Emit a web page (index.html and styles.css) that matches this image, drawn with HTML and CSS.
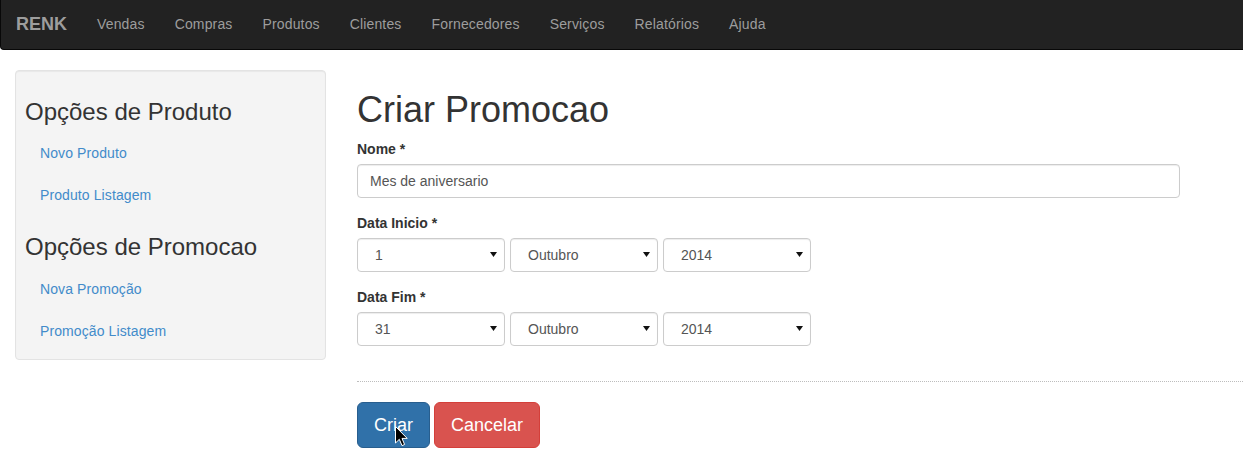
FILE: index.html
```html
<!DOCTYPE html>
<html lang="pt">
<head>
<meta charset="utf-8">
<title>Criar Promocao</title>
<link rel="stylesheet" href="styles.css">
</head>
<body>
<nav class="navbar">
  <a class="brand" href="#">RENK</a>
  <ul class="nav-links">
    <li><a href="#">Vendas</a></li>
    <li><a href="#">Compras</a></li>
    <li><a href="#">Produtos</a></li>
    <li><a href="#">Clientes</a></li>
    <li><a href="#">Fornecedores</a></li>
    <li><a href="#">Serviços</a></li>
    <li><a href="#">Relatórios</a></li>
    <li><a href="#">Ajuda</a></li>
  </ul>
</nav>
<div class="layout">
  <aside class="well">
    <h3>Opções de Produto</h3>
    <ul class="side-nav">
      <li><a href="#">Novo Produto</a></li>
      <li><a href="#">Produto Listagem</a></li>
    </ul>
    <h3>Opções de Promocao</h3>
    <ul class="side-nav">
      <li><a href="#">Nova Promoção</a></li>
      <li><a href="#">Promoção Listagem</a></li>
    </ul>
  </aside>
  <main class="main">
    <h1>Criar Promocao</h1>
    <div class="form-group">
      <label class="label">Nome *</label>
      <div class="input">Mes de aniversario</div>
    </div>
    <div class="form-group">
      <label class="label">Data Inicio *</label>
      <div class="selects">
        <div class="select"><span>1</span><svg class="caret" width="7" height="5" viewBox="0 0 7 5"><path d="M0 0H7L3.5 5Z" fill="#111"/></svg></div>
        <div class="select"><span>Outubro</span><svg class="caret" width="7" height="5" viewBox="0 0 7 5"><path d="M0 0H7L3.5 5Z" fill="#111"/></svg></div>
        <div class="select"><span>2014</span><svg class="caret" width="7" height="5" viewBox="0 0 7 5"><path d="M0 0H7L3.5 5Z" fill="#111"/></svg></div>
      </div>
    </div>
    <div class="form-group">
      <label class="label">Data Fim *</label>
      <div class="selects">
        <div class="select"><span>31</span><svg class="caret" width="7" height="5" viewBox="0 0 7 5"><path d="M0 0H7L3.5 5Z" fill="#111"/></svg></div>
        <div class="select"><span>Outubro</span><svg class="caret" width="7" height="5" viewBox="0 0 7 5"><path d="M0 0H7L3.5 5Z" fill="#111"/></svg></div>
        <div class="select"><span>2014</span><svg class="caret" width="7" height="5" viewBox="0 0 7 5"><path d="M0 0H7L3.5 5Z" fill="#111"/></svg></div>
      </div>
    </div>
    <hr class="divider">
    <div class="actions">
      <button class="btn btn-primary">Criar</button>
      <button class="btn btn-danger">Cancelar</button>
      <svg class="cursor" width="13" height="21" viewBox="0 0 13 21"><path d="M0.5 0.5V17L4.3 13.3L7 19.6L9.6 18.5L7 12.4H12.2Z" fill="#000" stroke="#fff" stroke-width="1"/></svg>
    </div>
  </main>
</div>
</body>
</html>
```

FILE: styles.css
```css
* { box-sizing: border-box; }
html, body { margin: 0; padding: 0; }
body {
  font-family: "Liberation Sans", Arial, sans-serif;
  font-size: 14px;
  line-height: 20px;
  color: #333;
  background: #fff;
  overflow: hidden;
}
a { text-decoration: none; }
ul { list-style: none; margin: 0; padding: 0; }

.navbar {
  display: flex;
  align-items: flex-start;
  height: 50px;
  background: #222;
  border-left: 1px solid #080808;
  border-bottom: 1px solid #080808;
  border-bottom-left-radius: 4px;
}
.brand {
  display: block;
  padding: 14px 15px 15px 15px;
  font-size: 18px;
  font-weight: bold;
  line-height: 20px;
  color: #9d9d9d;
}
.nav-links { display: flex; }
.nav-links a {
  display: block;
  padding: 14px 15px 15px;
  line-height: 20px;
  letter-spacing: 0.15px;
  color: #9d9d9d;
}

.layout {
  display: flex;
  align-items: flex-start;
  gap: 31px;
  margin-top: 20px;
  padding-left: 15px;
}
.well {
  width: 311px;
  flex: none;
  background: #f4f4f4;
  border: 1px solid #e3e3e3;
  border-radius: 4px;
  box-shadow: inset 0 1px 1px rgba(0,0,0,.05);
  padding: 9px 9px 8px;
}
.well h3 {
  margin: 19px 0 8px;
  font-size: 24px;
  font-weight: normal;
  line-height: 26.4px;
  color: #333;
}
.side-nav li + li { margin-top: 2px; }
.side-nav a {
  display: block;
  padding: 10px 15px;
  letter-spacing: 0.1px;
  color: #428bca;
}

.main {
  flex: 1;
  min-width: 0;
  display: flex;
  flex-direction: column;
  align-items: flex-start;
}
.main h1 {
  margin: 20px 0 9px;
  font-size: 36px;
  font-weight: normal;
  line-height: 39.6px;
  color: #333;
}
.form-group { margin-bottom: 15px; }
.label {
  display: block;
  margin-bottom: 5px;
  font-weight: bold;
  color: #333;
}
.input {
  width: 823px;
  height: 34px;
  padding: 6px 12px;
  border: 1px solid #ccc;
  border-radius: 4px;
  box-shadow: inset 0 1px 1px rgba(0,0,0,.075);
  color: #555;
}
.selects { display: flex; gap: 5px; }
.select {
  width: 148px;
  height: 34px;
  display: flex;
  align-items: center;
  justify-content: space-between;
  padding: 0 7px 0 17px;
  border: 1px solid #ccc;
  border-radius: 4px;
  box-shadow: inset 0 1px 1px rgba(0,0,0,.075);
  color: #555;
}
.caret { display: block; }

.divider {
  align-self: stretch;
  margin: 20px 0;
  border: 0;
  border-top: 1px dotted #bdbdbd;
  height: 0;
}
.actions {
  position: relative;
  display: flex;
  gap: 4px;
}
.btn {
  font-family: inherit;
  font-size: 18px;
  line-height: 24px;
  padding: 10px 16px;
  border: 1px solid transparent;
  border-radius: 6px;
  color: #fff;
  cursor: pointer;
}
.btn-primary { background: #3071a9; border-color: #285e8e; }
.btn-danger { background: #d9534f; border-color: #d43f3a; }
.cursor {
  position: absolute;
  left: 38px;
  top: 24px;
}
```
